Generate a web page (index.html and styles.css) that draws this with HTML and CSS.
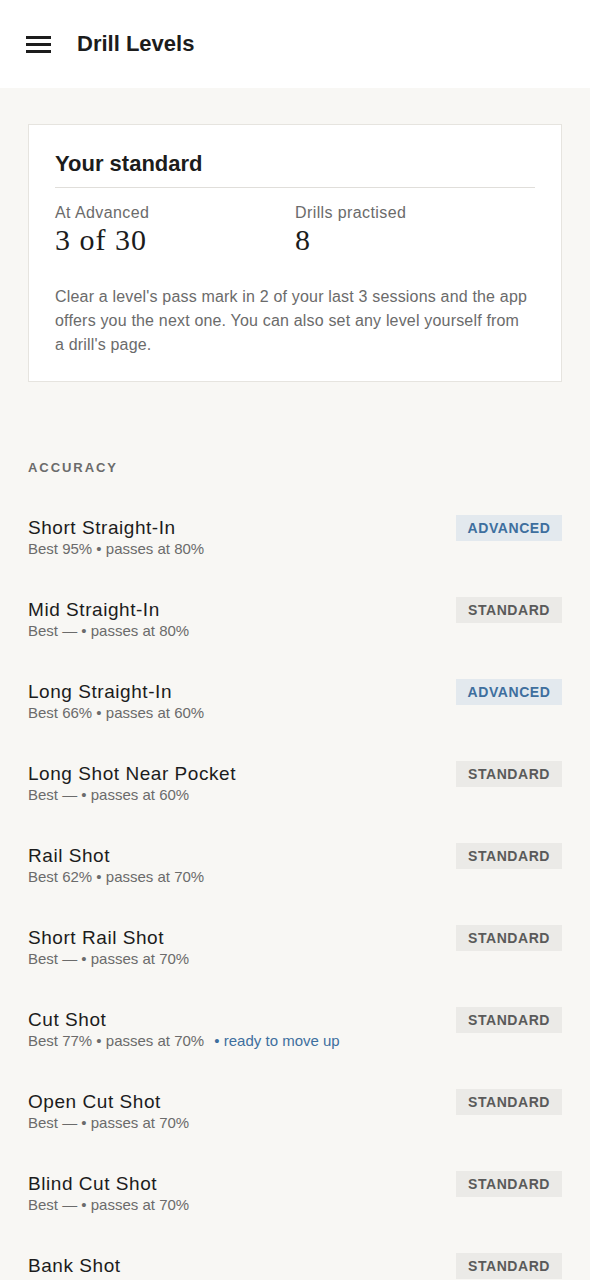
FILE: index.html
```html
<!DOCTYPE html>
<html lang="en">
<head>
<meta charset="UTF-8">
<title>Drill Levels</title>
<link rel="stylesheet" href="styles.css">
</head>
<body>
	<header class="topbar">
		<svg class="menuIcon" width="26" height="20" viewBox="0 0 26 20">
			<rect x="0" y="2" width="25" height="3" fill="#1c1c1c"/>
			<rect x="0" y="9" width="25" height="3" fill="#1c1c1c"/>
			<rect x="0" y="16" width="25" height="3" fill="#1c1c1c"/>
		</svg>
		<h1 class="pageTitle">Drill Levels</h1>
	</header>

	<main class="content">
		<section class="card">
			<h2 class="cardTitle">Your standard</h2>
			<div class="stats">
				<div class="stat">
					<div class="statLabel">At Advanced</div>
					<div class="statValue">3 of 30</div>
				</div>
				<div class="stat">
					<div class="statLabel">Drills practised</div>
					<div class="statValue">8</div>
				</div>
			</div>
			<p class="cardNote">Clear a level's pass mark in 2 of your last 3 sessions and the app offers you the next one. You can also set any level yourself from a drill's page.</p>
		</section>

		<h3 class="sectionHeader">ACCURACY</h3>
		<ul class="drillList">
			<li class="drill">
				<div class="drillText"><div class="drillName">Short Straight-In</div><div class="drillMeta">Best 95% • passes at 80%</div></div>
				<span class="badge advanced">ADVANCED</span>
			</li>
			<li class="drill">
				<div class="drillText"><div class="drillName">Mid Straight-In</div><div class="drillMeta">Best — • passes at 80%</div></div>
				<span class="badge">STANDARD</span>
			</li>
			<li class="drill">
				<div class="drillText"><div class="drillName">Long Straight-In</div><div class="drillMeta">Best 66% • passes at 60%</div></div>
				<span class="badge advanced">ADVANCED</span>
			</li>
			<li class="drill">
				<div class="drillText"><div class="drillName">Long Shot Near Pocket</div><div class="drillMeta">Best — • passes at 60%</div></div>
				<span class="badge">STANDARD</span>
			</li>
			<li class="drill">
				<div class="drillText"><div class="drillName">Rail Shot</div><div class="drillMeta">Best 62% • passes at 70%</div></div>
				<span class="badge">STANDARD</span>
			</li>
			<li class="drill">
				<div class="drillText"><div class="drillName">Short Rail Shot</div><div class="drillMeta">Best — • passes at 70%</div></div>
				<span class="badge">STANDARD</span>
			</li>
			<li class="drill">
				<div class="drillText"><div class="drillName">Cut Shot</div><div class="drillMeta">Best 77% • passes at 70% <span class="ready">• ready to move up</span></div></div>
				<span class="badge">STANDARD</span>
			</li>
			<li class="drill">
				<div class="drillText"><div class="drillName">Open Cut Shot</div><div class="drillMeta">Best — • passes at 70%</div></div>
				<span class="badge">STANDARD</span>
			</li>
			<li class="drill">
				<div class="drillText"><div class="drillName">Blind Cut Shot</div><div class="drillMeta">Best — • passes at 70%</div></div>
				<span class="badge">STANDARD</span>
			</li>
			<li class="drill">
				<div class="drillText"><div class="drillName">Bank Shot</div><div class="drillMeta">Best — • passes at 70%</div></div>
				<span class="badge">STANDARD</span>
			</li>
		</ul>
	</main>
</body>
</html>
```
FILE: styles.css
```css
body {
	margin: 0;
	background: #f8f7f4;
	font-family: 'Liberation Sans', Arial, sans-serif;
	color: #1c1c1c;
}
.topbar {
	display: flex;
	align-items: center;
	height: 88px;
	padding: 0 26px;
	background: #ffffff;
}
.menuIcon {
	display: block;
	margin-right: 25px;
}
.pageTitle {
	margin: 0;
	font-size: 22px;
	font-weight: 600;
}
.content {
	padding: 36px 28px 0;
}
.card {
	background: #ffffff;
	border: 1px solid #e6e4df;
	padding: 26px 26px 24px;
}
.cardTitle {
	margin: 0;
	padding-bottom: 11px;
	border-bottom: 1px solid #e0deda;
	font-size: 22px;
	line-height: 25px;
	font-weight: 600;
}
.stats {
	display: grid;
	grid-template-columns: 240px 1fr;
	margin-top: 15px;
}
.statLabel {
	font-size: 16px;
	line-height: 19px;
	letter-spacing: 0.4px;
	color: #6b6b6b;
}
.statValue {
	font-family: 'Liberation Serif', 'DejaVu Serif', serif;
	font-size: 30px;
	line-height: 36px;
	letter-spacing: 1px;
}
.cardNote {
	max-width: 474px;
	margin: 27px 0 0;
	font-size: 16px;
	line-height: 24px;
	letter-spacing: 0.18px;
	color: #6b6b6b;
}
.sectionHeader {
	margin: 78px 0 0;
	font-size: 13px;
	line-height: 15px;
	font-weight: 600;
	letter-spacing: 0.15em;
	color: #6b6b6b;
}
.drillList {
	list-style: none;
	margin: 40px 0 0;
	padding: 0;
}
.drill {
	display: flex;
	justify-content: space-between;
	align-items: flex-start;
	height: 82px;
}
.drillName {
	font-size: 19px;
	line-height: 26px;
	letter-spacing: 0.55px;
}
.drillMeta {
	font-size: 15px;
	line-height: 16px;
	color: #6b6b6b;
}
.ready {
	margin-left: 6px;
	color: #3e6f9e;
}
.badge {
	width: 106px;
	height: 26px;
	line-height: 26px;
	text-align: center;
	font-size: 14px;
	font-weight: 600;
	letter-spacing: 0.04em;
	background: #ebeae7;
	color: #5a5a5a;
}
.badge.advanced {
	background: #e3e9ee;
	color: #3e6f9e;
}
```
